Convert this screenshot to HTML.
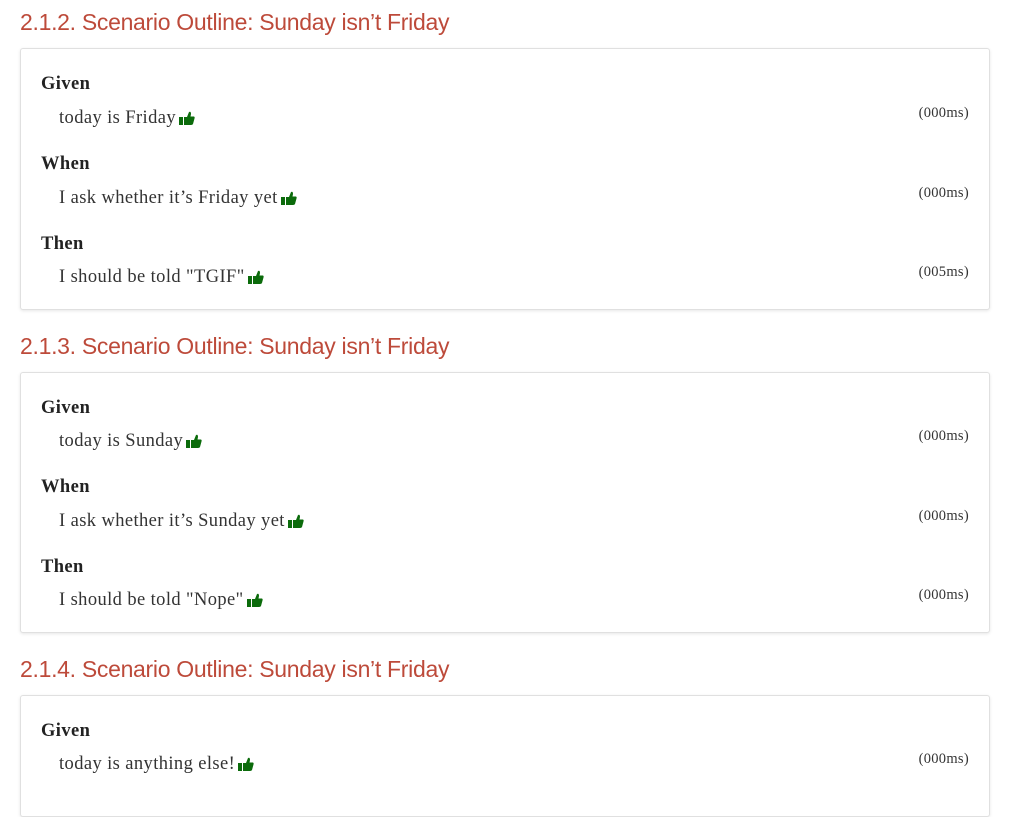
<!DOCTYPE html>
<html><head><style>
body{margin:0;background:#fff;width:1014px;height:770px;overflow:hidden;position:relative;font-family:"Liberation Serif",serif;color:#333}
h2{position:absolute;left:20px;margin:0;font-family:"Liberation Sans",sans-serif;font-weight:normal;font-size:23px;color:#bd4a3a;letter-spacing:-0.3px;line-height:30px}
.box{position:absolute;left:20px;width:968px;border:1px solid #e0e0e0;border-radius:3px;box-shadow:0 1px 3px rgba(0,0,0,.1);background:#fff}
.k{position:absolute;left:20px;font-weight:bold;font-size:18.5px;color:#222;line-height:20px;letter-spacing:0.4px;margin-top:1px}
.s{position:absolute;left:38px;font-size:18.5px;color:#333;line-height:20px;letter-spacing:0.4px;margin-top:2px}
.t{position:absolute;right:20px;font-size:14.5px;color:#333;line-height:16px;letter-spacing:0.3px}
svg{vertical-align:-2px;margin-left:3px}
</style></head><body>
<h2 style="top:7px">2.1.2. Scenario Outline: Sunday isn’t Friday</h2>
<div class="box" style="top:48px;height:260px">
<div class="k" style="top:24px">Given</div>
<div class="s" style="top:57px">today is Friday<svg width="16" height="14" viewBox="0 0 16 14"><rect x="0" y="6" width="4" height="8" fill="#0b6b0b"/><path d="M5 6 L8 6 L10 1 Q12 0 12 3 L11.5 5.5 L15 5.5 Q16 6 15.5 7.5 L14 13 Q13.5 14 12 14 L5 14Z" fill="#0b6b0b"/></svg></div>
<div class="t" style="top:56px">(000ms)</div>
<div class="k" style="top:104px">When</div>
<div class="s" style="top:137px">I ask whether it’s Friday yet<svg width="16" height="14" viewBox="0 0 16 14"><rect x="0" y="6" width="4" height="8" fill="#0b6b0b"/><path d="M5 6 L8 6 L10 1 Q12 0 12 3 L11.5 5.5 L15 5.5 Q16 6 15.5 7.5 L14 13 Q13.5 14 12 14 L5 14Z" fill="#0b6b0b"/></svg></div>
<div class="t" style="top:136px">(000ms)</div>
<div class="k" style="top:184px">Then</div>
<div class="s" style="top:216px">I should be told "TGIF"<svg width="16" height="14" viewBox="0 0 16 14"><rect x="0" y="6" width="4" height="8" fill="#0b6b0b"/><path d="M5 6 L8 6 L10 1 Q12 0 12 3 L11.5 5.5 L15 5.5 Q16 6 15.5 7.5 L14 13 Q13.5 14 12 14 L5 14Z" fill="#0b6b0b"/></svg></div>
<div class="t" style="top:215px">(005ms)</div>
</div>
<h2 style="top:331px">2.1.3. Scenario Outline: Sunday isn’t Friday</h2>
<div class="box" style="top:372px;height:259px">
<div class="k" style="top:24px">Given</div>
<div class="s" style="top:56px">today is Sunday<svg width="16" height="14" viewBox="0 0 16 14"><rect x="0" y="6" width="4" height="8" fill="#0b6b0b"/><path d="M5 6 L8 6 L10 1 Q12 0 12 3 L11.5 5.5 L15 5.5 Q16 6 15.5 7.5 L14 13 Q13.5 14 12 14 L5 14Z" fill="#0b6b0b"/></svg></div>
<div class="t" style="top:55px">(000ms)</div>
<div class="k" style="top:103px">When</div>
<div class="s" style="top:136px">I ask whether it’s Sunday yet<svg width="16" height="14" viewBox="0 0 16 14"><rect x="0" y="6" width="4" height="8" fill="#0b6b0b"/><path d="M5 6 L8 6 L10 1 Q12 0 12 3 L11.5 5.5 L15 5.5 Q16 6 15.5 7.5 L14 13 Q13.5 14 12 14 L5 14Z" fill="#0b6b0b"/></svg></div>
<div class="t" style="top:135px">(000ms)</div>
<div class="k" style="top:183px">Then</div>
<div class="s" style="top:215px">I should be told "Nope"<svg width="16" height="14" viewBox="0 0 16 14"><rect x="0" y="6" width="4" height="8" fill="#0b6b0b"/><path d="M5 6 L8 6 L10 1 Q12 0 12 3 L11.5 5.5 L15 5.5 Q16 6 15.5 7.5 L14 13 Q13.5 14 12 14 L5 14Z" fill="#0b6b0b"/></svg></div>
<div class="t" style="top:214px">(000ms)</div>
</div>
<h2 style="top:654px">2.1.4. Scenario Outline: Sunday isn’t Friday</h2>
<div class="box" style="top:695px;height:120px">
<div class="k" style="top:24px">Given</div>
<div class="s" style="top:56px">today is anything else!<svg width="16" height="14" viewBox="0 0 16 14"><rect x="0" y="6" width="4" height="8" fill="#0b6b0b"/><path d="M5 6 L8 6 L10 1 Q12 0 12 3 L11.5 5.5 L15 5.5 Q16 6 15.5 7.5 L14 13 Q13.5 14 12 14 L5 14Z" fill="#0b6b0b"/></svg></div>
<div class="t" style="top:55px">(000ms)</div>
</div>
</body></html>
